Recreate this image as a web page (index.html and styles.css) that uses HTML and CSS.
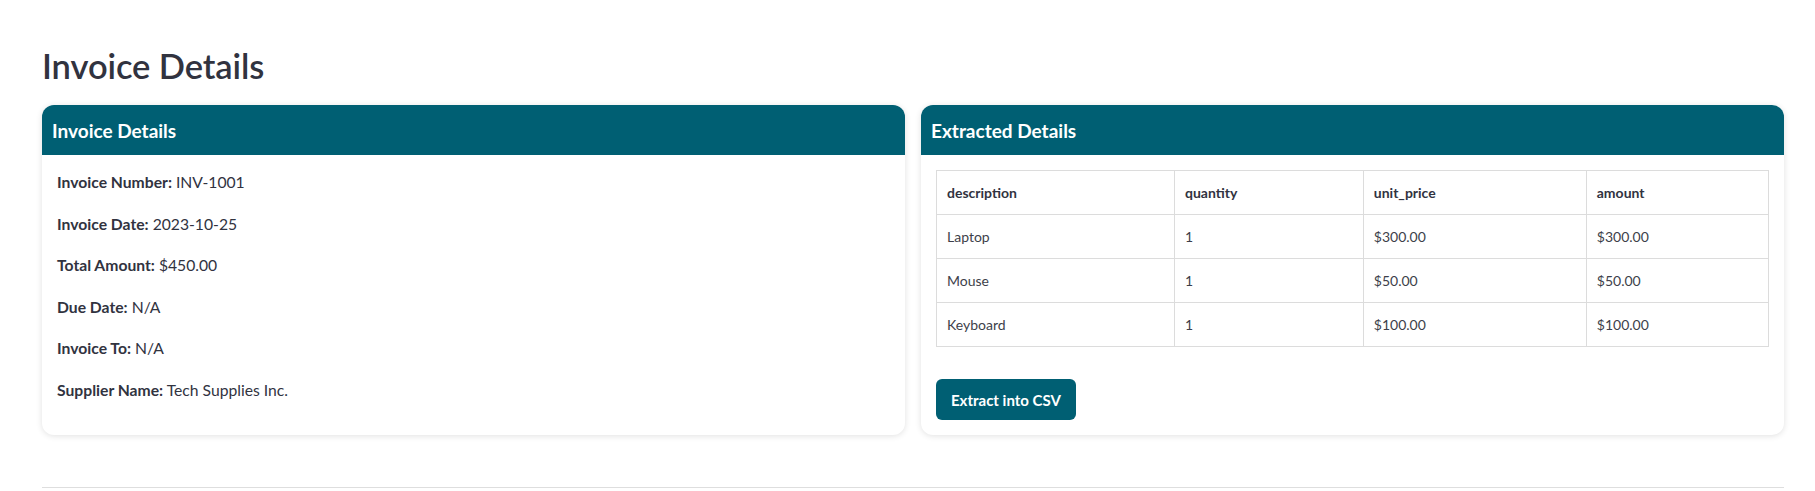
FILE: index.html
```html
<!DOCTYPE html>
<html lang="en">
<head>
<meta charset="utf-8">
<title>Invoice Details</title>
<link rel="stylesheet" href="styles.css">
</head>
<body>
<main class="page">
  <h1 class="page-title">Invoice Details</h1>
  <section class="cards">
    <article class="card">
      <header class="card-head">Invoice Details</header>
      <div class="card-body">
        <p><strong>Invoice Number:</strong> INV-1001</p>
        <p><strong>Invoice Date:</strong> 2023-10-25</p>
        <p><strong>Total Amount:</strong> $450.00</p>
        <p><strong>Due Date:</strong> N/A</p>
        <p><strong>Invoice To:</strong> N/A</p>
        <p><strong>Supplier Name:</strong> Tech Supplies Inc.</p>
      </div>
    </article>
    <article class="card">
      <header class="card-head">Extracted Details</header>
      <div class="card-body">
        <table class="items">
          <colgroup>
            <col class="c-desc"><col class="c-qty"><col class="c-unit"><col class="c-amt">
          </colgroup>
          <thead>
            <tr><th>description</th><th>quantity</th><th>unit_price</th><th>amount</th></tr>
          </thead>
          <tbody>
            <tr><td>Laptop</td><td>1</td><td>$300.00</td><td>$300.00</td></tr>
            <tr><td>Mouse</td><td>1</td><td>$50.00</td><td>$50.00</td></tr>
            <tr><td>Keyboard</td><td>1</td><td>$100.00</td><td>$100.00</td></tr>
          </tbody>
        </table>
        <button class="btn" type="button">Extract into CSV</button>
      </div>
    </article>
  </section>
  <hr class="rule">
</main>
</body>
</html>
```

FILE: styles.css
```css
* { box-sizing: border-box; }

html, body {
  margin: 0;
  background: #ffffff;
}

body {
  font-family: Lato, "Noto Sans", "Liberation Sans", sans-serif;
  color: #31333f;
}

.page {
  padding: 0 31px 0 42px;
  overflow: hidden;
}

.page-title {
  margin: 46px 0 0 0;
  height: 59px;
  font-size: 34.5px;
  line-height: 40px;
  font-weight: 600;
  color: #31333f;
  letter-spacing: -0.1px;
}

.cards {
  display: grid;
  grid-template-columns: 1fr 1fr;
  gap: 16px;
}

.card {
  background: #fff;
  border-radius: 12px;
  box-shadow: 0 1px 6px rgba(0, 0, 0, 0.12);
  overflow: hidden;
  display: flex;
  flex-direction: column;
}

.card-head {
  height: 50px;
  display: flex;
  align-items: center;
  padding: 0 10px;
  background: #005f73;
  color: #ffffff;
  font-size: 19px;
  font-weight: 700;
}

.card-body {
  padding: 15px;
  flex: 1;
}

.card-body p {
  margin: 0 0 16px 0;
  font-size: 15.7px;
  line-height: 25.6px;
  color: #31333f;
}

.card-body strong {
  font-weight: 700;
}

.items {
  width: 100%;
  border-collapse: collapse;
  border: 1px solid #dcdcdc;
  font-size: 14px;
  color: #31333f;
}

.c-desc { width: 28.6%; }
.c-qty { width: 22.7%; }
.c-unit { width: 26.8%; }
.c-amt { width: 21.9%; }

.items th,
.items td {
  border: 1px solid #dcdcdc;
  padding: 10px 10px;
  line-height: 23px;
  text-align: left;
}

.items th {
  font-weight: 700;
}

.items td {
  font-weight: 400;
  color: #3d3f4a;
}

.btn {
  display: block;
  margin-top: 32px;
  height: 41px;
  padding: 0 15px;
  border: 0;
  border-radius: 6px;
  background: #005f73;
  color: #ffffff;
  font-family: inherit;
  font-size: 15px;
  font-weight: 700;
  cursor: pointer;
}

.rule {
  margin: 52px 0 0 0;
  border: 0;
  border-top: 1px solid #dedede;
}
```
